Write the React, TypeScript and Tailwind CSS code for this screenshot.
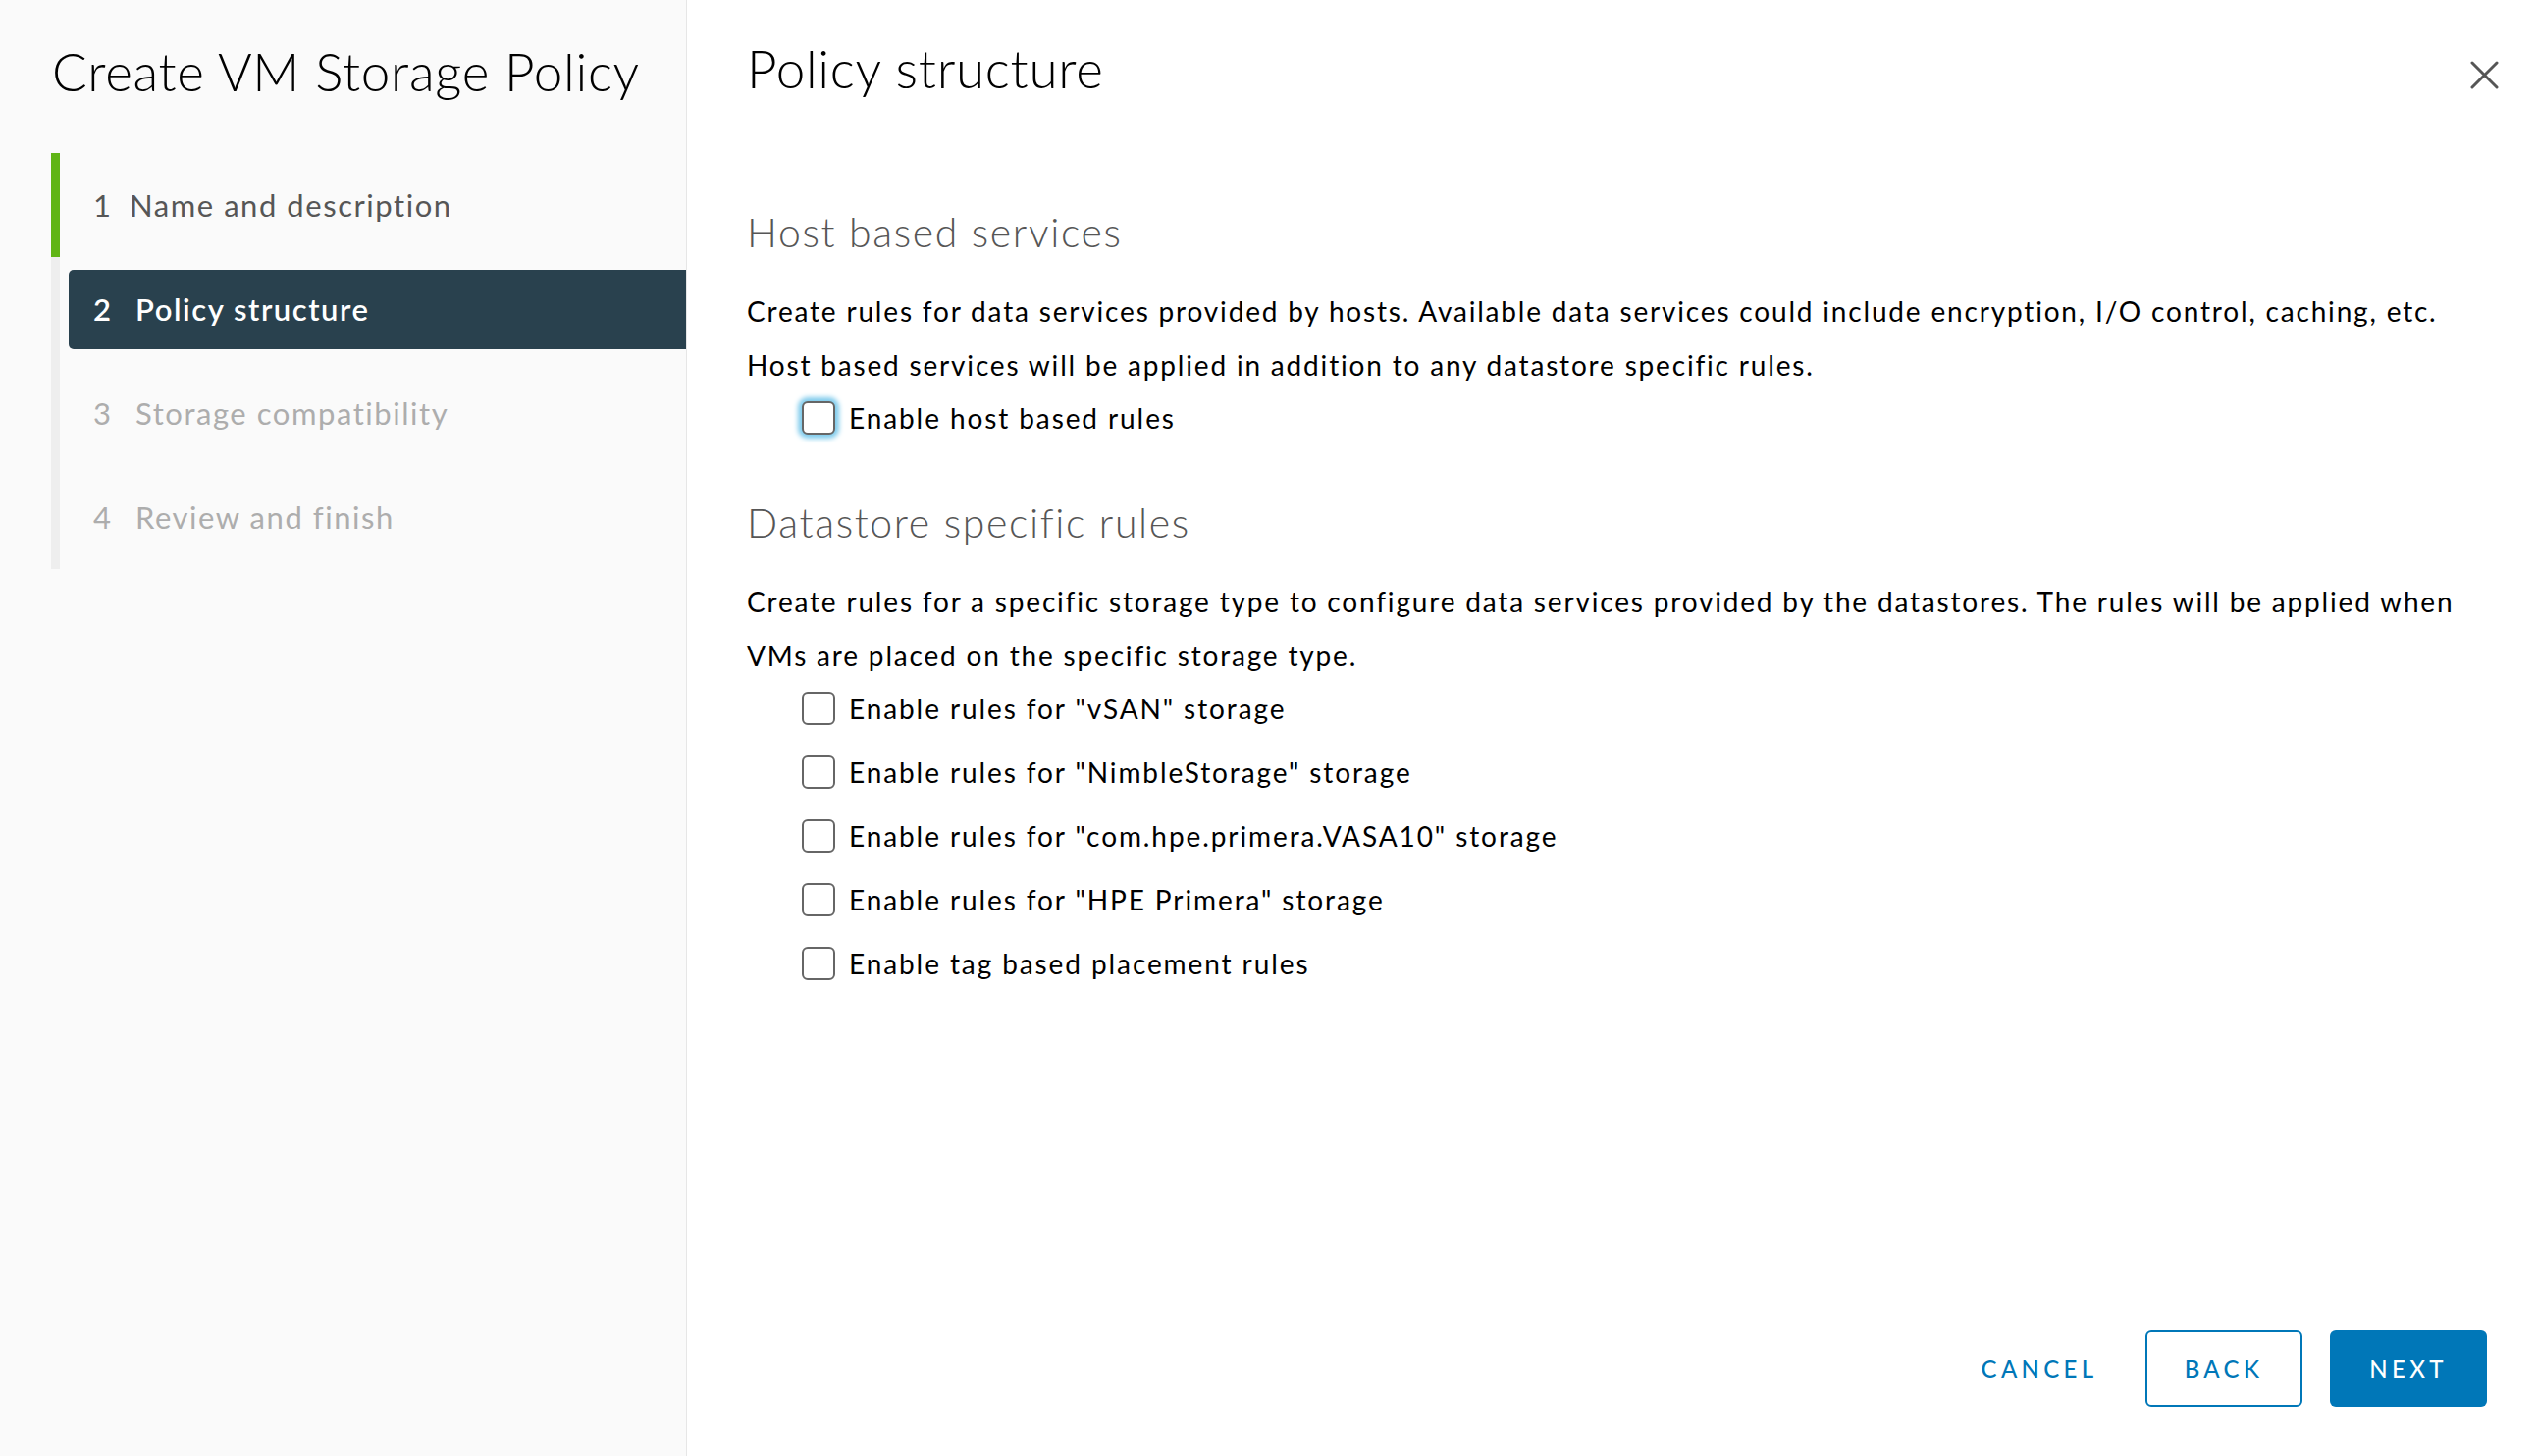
import React from "react";

type Step = { n: number; label: string; state: "done" | "active" | "todo" };

const steps: Step[] = [
  { n: 1, label: "Name and description", state: "done" },
  { n: 2, label: "Policy structure", state: "active" },
  { n: 3, label: "Storage compatibility", state: "todo" },
  { n: 4, label: "Review and finish", state: "todo" },
];

const datastoreRules = [
  'Enable rules for "vSAN" storage',
  'Enable rules for "NimbleStorage" storage',
  'Enable rules for "com.hpe.primera.VASA10" storage',
  'Enable rules for "HPE Primera" storage',
  "Enable tag based placement rules",
];

function StepItem({ step }: { step: Step }) {
  const bar = step.state === "done" ? "border-[#60b515]" : "border-[#eeeeee]";
  if (step.state === "active") {
    return (
      <div className={`flex h-[106px] items-center border-l-[9px] ${bar}`}>
        <div className="ml-[9px] flex h-[81px] flex-1 items-center rounded-l-[5px] bg-[#29414e] pl-[25px] text-[31px] font-semibold tracking-[0.05em] text-white">
          <span className="w-[43px]">{step.n}</span>
          <span>{step.label}</span>
        </div>
      </div>
    );
  }
  const color = step.state === "done" ? "text-[#565656]" : "text-[#adadad]";
  return (
    <div className={`flex h-[106px] items-center border-l-[9px] ${bar}`}>
      <div className={`ml-[9px] flex flex-1 items-center pl-[25px] text-[31px] tracking-[0.05em] ${color}`}>
        <span className={step.n === 1 ? "w-[37px]" : "w-[43px]"}>{step.n}</span>
        <span>{step.label}</span>
      </div>
    </div>
  );
}

function Checkbox({ label, focused }: { label: string; focused?: boolean }) {
  return (
    <label className="flex h-[52px] items-center pl-[56px]">
      <span
        className={`block size-[34px] rounded-[6px] border-2 border-[#666666] bg-white ${
          focused ? "shadow-[0_0_5px_4px_#7fcbec]" : ""
        }`}
      />
      <span className="ml-[14px] text-[28px] tracking-[0.068em] text-black">{label}</span>
    </label>
  );
}

export default function App() {
  return (
    <div className="flex h-[1484px] w-full overflow-hidden bg-white [font-family:Lato,sans-serif]">
      {/* wizard nav */}
      <aside className="w-[700px] shrink-0 border-r border-[#e6e6e6] bg-[#fafafa] pt-[43px]">
        <h1 className="pl-[53px] text-[53px] leading-[60px] font-light tracking-[0.013em] text-black">
          Create VM Storage Policy
        </h1>
        <nav className="mt-[53px] ml-[52px]">
          {steps.map((s) => (
            <StepItem key={s.n} step={s} />
          ))}
        </nav>
      </aside>

      {/* page */}
      <main className="flex flex-1 flex-col pl-[61px]">
        <div className="flex items-start justify-between pt-[40px] pr-[39px]">
          <h2 className="text-[53px] leading-[60px] font-light tracking-[0.013em] text-black">
            Policy structure
          </h2>
          <button className="mt-[22px] text-[#565656]" aria-label="Close">
            <svg width="29" height="29" viewBox="0 0 29 29" fill="none" stroke="currentColor" strokeWidth="3" strokeLinecap="round">
              <path d="M2 2 L27 27 M27 2 L2 27" />
            </svg>
          </button>
        </div>

        <section>
          <h3 className="mt-[112px] text-[41px] leading-[50px] font-light tracking-[0.04em] text-[#565656]">
            Host based services
          </h3>
          <p className="mt-[28px] text-[28px] leading-[55px] tracking-[0.065em] text-black">
            Create rules for data services provided by hosts. Available data services could include encryption, I/O control, caching, etc.
            <br />
            Host based services will be applied in addition to any datastore specific rules.
          </p>
          <Checkbox label="Enable host based rules" focused />
        </section>

        <section>
          <h3 className="mt-[56px] text-[41px] leading-[50px] font-light tracking-[0.04em] text-[#565656]">
            Datastore specific rules
          </h3>
          <p className="mt-[28px] text-[28px] leading-[55px] tracking-[0.065em] text-black">
            Create rules for a specific storage type to configure data services provided by the datastores. The rules will be applied when
            <br />
            VMs are placed on the specific storage type.
          </p>
          <div className="flex flex-col gap-[13px]">
            {datastoreRules.map((r) => (
              <Checkbox key={r} label={r} />
            ))}
          </div>
        </section>

        <div className="mt-auto flex justify-end gap-[28px] pr-[51px] pb-[50px]">
          <button className="h-[78px] w-[160px] text-[24px] font-medium tracking-[0.18em] text-[#0077b8]">CANCEL</button>
          <button className="h-[78px] w-[160px] rounded-[6px] border-2 border-[#0077b8] text-[24px] font-medium tracking-[0.18em] text-[#0077b8]">
            BACK
          </button>
          <button className="h-[78px] w-[160px] rounded-[6px] bg-[#0077b8] text-[24px] font-medium tracking-[0.18em] text-white">
            NEXT
          </button>
        </div>
      </main>
    </div>
  );
}
